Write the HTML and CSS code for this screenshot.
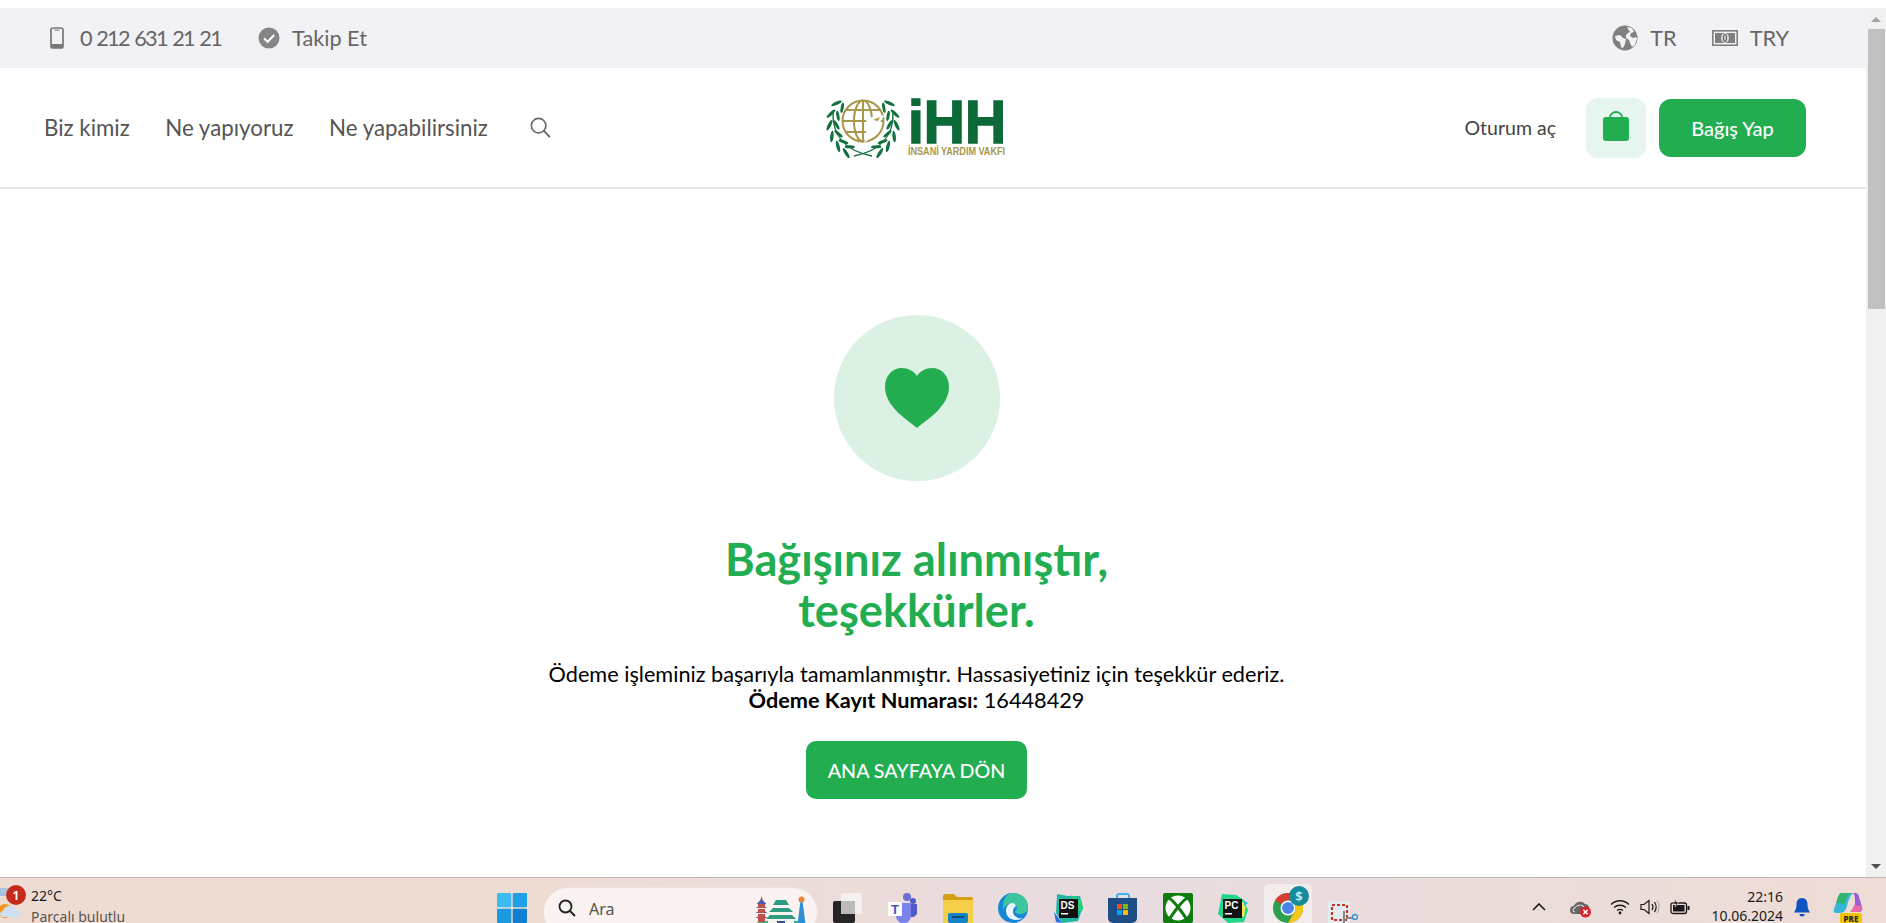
FILE: index.html
```html
<!DOCTYPE html>
<html lang="tr">
<head>
<meta charset="utf-8">
<title>Bağışınız alınmıştır</title>
<link rel="stylesheet" href="styles.css">
</head>
<body>
<div class="window">
  <div class="page">
    <div class="topbar">
      <div class="group">
        <span class="tb-item">
          <svg class="i-phone" viewBox="0 0 14 22"><rect x="1" y="1" width="12" height="20" rx="2" fill="none" stroke="#777" stroke-width="1.7"/><rect x="1" y="17" width="12" height="4" rx="1.5" fill="#777"/><rect x="4.5" y="2.6" width="5" height="1" fill="#777"/></svg>
          <span class="phone-num">0 212 631 21 21</span>
        </span>
        <span class="tb-item">
          <svg class="i-check" viewBox="0 0 22 22"><circle cx="11" cy="11" r="10.5" fill="#858585"/><path d="M6 11.2l3.6 3.6L16.2 8" fill="none" stroke="#fff" stroke-width="2"/></svg>
          Takip Et
        </span>
      </div>
      <div class="group group-right">
        <span class="tb-item">
          <svg class="i-globe" viewBox="0 0 26 26"><circle cx="13" cy="13" r="12.5" fill="#808080"/><path d="M3 11l5-1 3 3 3 1-1 5-2 4-2-1-1-5-4-2zM15 2l5 1 2 4-3 1-1 3 3 2 3-1 1 2-2 6-3 2-2-4-1-3-3-2 0-3 2-2 2-1-2-3z" fill="#f2f2f6"/></svg>
          TR
        </span>
        <span class="tb-item">
          <svg class="i-money" viewBox="0 0 26 16"><rect x="0.8" y="0.8" width="24.4" height="14.4" fill="#f2f2f6" stroke="#808080" stroke-width="1.6"/><rect x="3" y="3" width="20" height="10" fill="#808080"/><ellipse cx="13" cy="8" rx="4" ry="5" fill="#d8d8dc"/><ellipse cx="13" cy="8" rx="1.5" ry="3.5" fill="none" stroke="#666" stroke-width="1.2"/></svg>
          TRY
        </span>
      </div>
    </div>

    <header class="header">
      <nav class="nav">
        <a class="nav-link">Biz kimiz</a>
        <a class="nav-link">Ne yapıyoruz</a>
        <a class="nav-link">Ne yapabilirsiniz</a>
        <svg class="i-search" viewBox="0 0 22 22"><circle cx="9" cy="9" r="7.6" fill="none" stroke="#666" stroke-width="1.7"/><path d="M14.6 14.6l6.2 6.4" stroke="#666" stroke-width="2" fill="none"/></svg>
      </nav>
      <svg class="logo" viewBox="0 0 182 64">
        <defs>
          <g id="pair">
            <ellipse cx="3.4" cy="28" rx="1.7" ry="5.8" fill="#13703f" transform="rotate(28 3.4 28)"/>
            <ellipse cx="10.6" cy="28" rx="1.5" ry="5.2" fill="#13703f" transform="rotate(-28 10.6 28)"/>
          </g>
          <g id="branch">
            <use href="#pair" transform="rotate(38 37 28)"/>
            <use href="#pair" transform="rotate(18 37 28)"/>
            <use href="#pair" transform="rotate(-2 37 28)"/>
            <use href="#pair" transform="rotate(-22 37 28)"/>
            <use href="#pair" transform="rotate(-42 37 28)"/>
            <use href="#pair" transform="rotate(-60 37 28)"/>
            <path d="M7 16C6 40 20 55 46 60" fill="none" stroke="#13703f" stroke-width="1.400"/>
          </g>
        </defs>
        <use href="#branch"/>
        <use href="#branch" transform="translate(74 0) scale(-1 1)"/>
        <g fill="none" stroke="#a8974c" stroke-width="2">
          <circle cx="37" cy="25" r="20.5"/>
          <ellipse cx="37" cy="25" rx="9" ry="20.5"/>
          <path d="M17 25h40M20 14h34M20 36h20M37 4.500v40"/>
        </g>
        <path d="M40 24c5-3 10-5 14-4l6-1-5 4c0 8-6 17-17 24 3-8 4-16 2-23z" fill="#fff"/>
        <path d="M47 24l7-3-2 4z" fill="#a8974c"/>
        <text class="logo-main" x="82" y="47" textLength="98" lengthAdjust="spacingAndGlyphs">iHH</text>
        <text class="logo-sub" x="82" y="59" textLength="97" lengthAdjust="spacingAndGlyphs">İNSANİ YARDIM VAKFI</text>
      </svg>
      <div class="actions">
        <a class="login">Oturum aç</a>
        <span class="bag-tile">
          <svg class="i-bag" viewBox="0 0 26 30"><path d="M7 8V6.500a6 5.500 0 0 1 12 0V8" fill="none" stroke="#22ae50" stroke-width="1.800"/><rect x="0" y="6" width="26" height="24" rx="3" fill="#22ae50"/></svg>
        </span>
        <a class="donate">Bağış Yap</a>
      </div>
    </header>

    <main class="content">
      <div class="heart-circle">
        <svg class="i-heart" viewBox="0 0 64 60"><path d="M32 60C26 54 0 40 0 19 0 8 7 0 17 0c6 0 12 3 15 8 3-5 9-8 15-8 10 0 17 8 17 19 0 21-26 35-32 41z" fill="#22ae50"/></svg>
      </div>
      <h1 class="title">Bağışınız alınmıştır,<br>teşekkürler.</h1>
      <p class="message">Ödeme işleminiz başarıyla tamamlanmıştır. Hassasiyetiniz için teşekkür ederiz.<br><strong>Ödeme Kayıt Numarası:</strong> 16448429</p>
      <a class="home-btn">ANA SAYFAYA DÖN</a>
    </main>
  </div>
  <div class="scrollbar">
    <span class="arrow-up"></span>
    <span class="thumb"></span>
    <span class="arrow-down"></span>
  </div>
</div>

<footer class="taskbar">
  <div class="weather">
    <svg class="i-weather" viewBox="0 0 24 34"><path d="M0 4h6c5 0 7 4 5 8H0z" fill="#a9c5e4"/><circle cx="5" cy="27" r="7" fill="#f2941e"/><path d="M3 33c-4 0-4-6 0-6 1-3 3-5 7-5 3 0 5 2 6 4 4 0 7 3 6 7z" fill="#cfe0f2"/></svg>
    <span class="badge">1</span>
    <div class="weather-text">
      <span class="temp">22°C</span>
      <span class="cond">Parçalı bulutlu</span>
    </div>
  </div>
  <div class="apps">
    <svg class="tile i-win" viewBox="0 0 30 30"><rect width="14.300" height="14.300" rx="1.500" fill="#3dbcf2"/><rect x="15.700" width="14.300" height="14.300" rx="1" fill="#1e9fe6"/><rect y="15.700" width="14.300" height="14.300" rx="1" fill="#1a98e0"/><rect x="15.700" y="15.700" width="14.300" height="14.300" rx="1" fill="#0f7fd2"/></svg>
    <div class="searchbox">
      <svg class="i-find" viewBox="0 0 18 18"><circle cx="7.500" cy="7.500" r="6" fill="none" stroke="#222" stroke-width="1.800"/><path d="M12 12l5 5" stroke="#222" stroke-width="2"/></svg>
      <span class="ara">Ara</span>
      <svg class="i-scene" viewBox="0 0 58 32">
        <ellipse cx="29" cy="30" rx="29" ry="6" fill="#3fb58e"/>
        <path d="M9.500 0l1 4h-2z" fill="#c03a3a"/>
        <path d="M9.500 3l5 5h-10zM9.500 8l5.500 4h-11zM9.500 13l6 4h-12zM9.500 18l6 4h-12z" fill="#4a5fa5"/>
        <path d="M6 8h7v4H6zM6 13h7v4H6zM6 18h7v8H6z" fill="#c0504a"/>
        <path d="M24 4h10l3 5H21z" fill="#2e9a7f"/>
        <rect x="24" y="9" width="10" height="4" fill="#f3f6ef"/>
        <path d="M21 12h16l4 4H17z" fill="#2e9a7f"/>
        <rect x="20" y="16" width="18" height="4" fill="#f3f6ef"/>
        <path d="M18 19h22l4 4H14z" fill="#2e9a7f"/>
        <rect x="16" y="23" width="26" height="6" fill="#f3f6ef"/>
        <rect x="25" y="25" width="8" height="4" fill="#34508f"/>
        <path d="M48.500 5h2l3 23h-8z" fill="#2d8fd6"/>
        <circle cx="49.500" cy="3.500" r="3" fill="#e8873a"/>
      </svg>
    </div>
    <div class="app-list">
      <svg class="tile" viewBox="0 0 30 30"><rect x="8" y="0" width="21" height="21" rx="2" fill="#f4f1f0"/><rect x="0" y="8" width="22" height="22" rx="2" fill="#262626"/><rect x="8" y="8" width="14" height="13" fill="#bdbbba"/></svg>
      <svg class="tile" viewBox="0 0 30 30"><circle cx="19" cy="4" r="4" fill="#6b6fd0"/><circle cx="25" cy="8" r="3" fill="#5059c9"/><path d="M21 11h8v9a5 5 0 0 1-8 3z" fill="#5059c9"/><path d="M8 10h15v13a7 7 0 0 1-15 0z" fill="#7b83eb"/><rect x="0" y="9" width="14" height="14" fill="#fff"/><text class="teams-t" x="7" y="21" text-anchor="middle">T</text></svg>
      <svg class="tile" viewBox="0 0 30 30"><path d="M0 3a2 2 0 0 1 2-2h9l3 3h14a2 2 0 0 1 2 2v5H0z" fill="#d69e13"/><path d="M0 7h30v23H0z" fill="#f6cf4a"/><rect x="5" y="20" width="20" height="10" rx="2" fill="#1583c7"/><rect x="9" y="23" width="12" height="2" fill="#0a4f80"/></svg>
      <svg class="tile" viewBox="0 0 30 30"><circle cx="15" cy="15" r="15" fill="#1686d6"/><path d="M15 0c9 0 15 6 15 14 0 5-4 7-8 7-3 0-5-1-5-3 2-1 3-3 1-5-4-4-12-2-13 5-1-10 3-18 10-18z" fill="#3cc6a0"/><path d="M15 10c-4 0-7 3-7 8 0 5 4 9 10 9 3 0 5-1 7-2-6 1-10-2-10-7 0-3 2-4 3-5-1-2-2-3-3-3z" fill="#eaf5fb"/></svg>
      <svg class="tile" viewBox="0 0 30 30"><path d="M4 1l11 2 12 0 3 11-5 14-16 2-6-10z" fill="#1fb8a5"/><path d="M18 2l10 5 2 10-8 2z" fill="#2ad07c"/><path d="M1 19l8 11-6-1z" fill="#2c6be0"/><rect x="6" y="6" width="19" height="19" fill="#111"/><text class="jb" x="7.500" y="16">DS</text><rect x="8" y="20" width="7" height="1.500" fill="#fff"/></svg>
      <svg class="tile" viewBox="0 0 30 30"><path d="M9 7V3a2 2 0 0 1 2-2h8a2 2 0 0 1 2 2v4" fill="none" stroke="#3fb4e8" stroke-width="2"/><path d="M0 5h29v20a5 5 0 0 1-5 5H5a5 5 0 0 1-5-5z" fill="#1d4f86"/><rect x="9" y="11" width="5" height="5" fill="#f25022"/><rect x="15" y="11" width="5" height="5" fill="#7fba00"/><rect x="9" y="17" width="5" height="5" fill="#00a4ef"/><rect x="15" y="17" width="5" height="5" fill="#ffb900"/></svg>
      <svg class="tile" viewBox="0 0 30 30"><rect width="30" height="30" rx="2" fill="#107c10"/><circle cx="15" cy="15" r="12.500" fill="#fff"/><path d="M6 5C11 8 20 20 24 27M24 5C19 8 10 20 6 27" fill="none" stroke="#107c10" stroke-width="3"/></svg>
      <svg class="tile" viewBox="0 0 30 30"><path d="M4 1l14 1 8 5 4 10-4 12-16 1-10-9z" fill="#21d789"/><path d="M20 8l8 2-2 14-6-1z" fill="#f8e84f"/><path d="M26 8l4 2-4 3z" fill="#1fb8d3"/><rect x="5" y="6" width="19" height="19" fill="#111"/><text class="jb" x="6.500" y="16">PC</text><rect x="7" y="20" width="7" height="1.500" fill="#fff"/></svg>
      <span class="chrome-item">
        <svg class="tile tile-chrome" viewBox="0 0 30 30"><circle cx="15" cy="15" r="15" fill="#2f9e4f"/><path d="M15 0a15 15 0 0 1 13 7.500H15a7.500 7.500 0 0 0-6.500 3.800L2 7.500A15 15 0 0 1 15 0z" fill="#d93c30"/><path d="M28 7.500A15 15 0 0 1 15 30l6.500-11.300A7.500 7.500 0 0 0 21.500 11z" fill="#f5c518"/><circle cx="15" cy="15" r="7.500" fill="#fff"/><circle cx="15" cy="15" r="6" fill="#4a86e8"/></svg>
        <span class="s-badge">$</span>
      </span>
      <svg class="tile snip" viewBox="0 0 30 22"><rect width="22" height="22" rx="2" fill="#e4ecf0"/><rect x="4" y="4" width="15" height="15" fill="none" stroke="#c0392b" stroke-width="2.200" stroke-dasharray="3 2"/><path d="M16 10v12M18 17h6" stroke="#888" stroke-width="2"/><circle cx="27" cy="16" r="2.500" fill="none" stroke="#3a92d8" stroke-width="1.500"/></svg>
    </div>
  </div>
  <div class="tray">
    <svg class="i-caret" viewBox="0 0 14 8"><path d="M1 7l6-6 6 6" fill="none" stroke="#1a1a1a" stroke-width="1.600"/></svg>
    <svg class="i-cloud" viewBox="0 0 22 20"><path d="M4 16a4 4 0 0 1 0-8c1-4 8-6 11-2 3 0 5 3 4 6l-3 4z" fill="#666"/><path d="M5 14a2 2 0 0 1 0-4c1-3 7-4 9-1" fill="none" stroke="#eee" stroke-width="1"/><circle cx="15.500" cy="14" r="5.500" fill="#d8232f"/><path d="M13.300 11.800l4.400 4.400M17.700 11.800l-4.400 4.400" stroke="#fff" stroke-width="1.500"/></svg>
    <svg class="i-wifi" viewBox="0 0 20 16"><path d="M1 5.500c5-5 13-5 18 0M4 8.500c3.500-3 8.500-3 12 0M7 11.500c2-1.500 4-1.500 6 0" fill="none" stroke="#1a1a1a" stroke-width="1.300"/><circle cx="10" cy="14" r="1.400" fill="#1a1a1a"/></svg>
    <svg class="i-sound" viewBox="0 0 20 16"><path d="M1 5.500h3l5-4v13l-5-4H1z" fill="none" stroke="#1a1a1a" stroke-width="1.200"/><path d="M12 5c1.300 2 1.300 4 0 6M14.500 3c2 3 2 7 0 10" fill="none" stroke="#1a1a1a" stroke-width="1.200"/><path d="M17 1.500c2.600 4 2.600 9 0 13" fill="none" stroke="#aaa" stroke-width="1.100"/></svg>
    <svg class="i-batt" viewBox="0 0 20 16"><rect x="1" y="4" width="15.500" height="10.500" rx="2" fill="none" stroke="#1a1a1a" stroke-width="1.300"/><rect x="3" y="6" width="11.500" height="6.500" fill="#1a1a1a"/><rect x="17.500" y="7" width="2" height="4" fill="#1a1a1a"/><path d="M6 0L3 5h3l-1 3 4-5H6z" fill="#1a1a1a" stroke="#eedcd3" stroke-width=".6"/></svg>
    <div class="clock"><span>22:16</span><span>10.06.2024</span></div>
    <svg class="i-bell" viewBox="0 0 16 20"><path d="M8 0c-4 0-5.500 3-5.500 6.500C2.500 10 1.500 12 0 14.500h16C14.500 12 13.500 10 13.500 6.500 13.500 3 12 0 8 0z" fill="#0f53c0"/><path d="M5.500 16a2.500 2.500 0 0 0 5 0z" fill="#0f53c0"/></svg>
    <span class="copilot">
      <svg class="i-copilot" viewBox="0 0 30 26"><path d="M9 1h11c-3 3-5 8-6 13-1 4-3 7-7 7H3c-2 0-3-2-2-4l4-12c1-3 2-4 4-4z" fill="#36b7d8"/><path d="M9 1c-2 0-3 2-4 4L3 12c3-2 6-1 8 1l3-8c1-3 3-4 6-4z" fill="#2fb56e"/><path d="M20 1h2c2 0 4 1 4 4l3 10c1 3-1 5-3 5h-9c4-2 5-6 5-10s0-7-2-9z" fill="#9b5ed6"/><path d="M24 20h-7c2-2 3-4 4-7l8 1c1 4-2 6-5 6z" fill="#e86bb0"/></svg>
      <span class="pre">PRE</span>
    </span>
  </div>
</footer>
</body>
</html>
```

FILE: styles.css
```css
* { box-sizing: border-box; }
html, body { margin: 0; height: 100%; overflow: hidden; background: #fff; }
body {
  display: flex;
  flex-direction: column;
  height: 923px;
  font-family: Lato, "Open Sans", sans-serif;
}
.window { flex: 0 0 877px; display: flex; min-height: 0; }
.page { flex: 1; min-width: 0; padding-top: 8px; }

.topbar {
  height: 60px;
  background: #f2f2f6;
  display: flex;
  align-items: center;
  justify-content: space-between;
  padding: 0 77px 0 49px;
  color: #666;
  font-size: 21.7px;
}
.group { display: flex; align-items: center; gap: 37px; }
.group-right { gap: 35px; }
.tb-item { display: inline-flex; align-items: center; gap: 12px; }
.phone-num { letter-spacing: -1.7px; word-spacing: 1.5px; margin-left: 3px; }
.i-phone { width: 16px; height: 22px; }
.i-check { width: 22px; height: 22px; }
.i-globe { width: 26px; height: 26px; }
.i-money { width: 26px; height: 16px; }

.header {
  height: 121px;
  border-bottom: 2px solid #e8e8ea;
  display: flex;
  align-items: center;
  justify-content: space-between;
  padding: 0 60px 0 44px;
}
.nav { display: flex; align-items: center; gap: 35.5px; color: #555; font-size: 22.3px; flex: 1; }
.nav-link { white-space: nowrap; }
.i-search { width: 21px; height: 21px; margin-left: 7px; }
.logo { width: 182px; height: 64px; flex: none; margin-right: 17px; overflow: visible; }
.logo-main { font-family: "Liberation Sans", sans-serif; font-weight: 700; font-size: 62px; fill: #0c6a38; stroke: #0c6a38; stroke-width: 1.6px; }
.logo-sub { font-family: "Liberation Sans", sans-serif; font-weight: 700; font-size: 10.5px; fill: #a8974c; }
.actions { display: flex; align-items: center; flex: 1; justify-content: flex-end; }
.login { font-size: 19.5px; color: #444; margin-right: 30px; }
.bag-tile {
  width: 60px; height: 60px; border-radius: 12px; background: #e6f5ed;
  display: flex; align-items: center; justify-content: center;
}
.i-bag { width: 26px; height: 30px; margin-bottom: 4px; }
.donate {
  width: 147px; height: 58px; margin-left: 13px; border-radius: 12px;
  background: #22ae50; color: #fff; font-size: 20px; font-weight: 500;
  display: flex; align-items: center; justify-content: center;
}

.content { display: flex; flex-direction: column; align-items: center; padding: 126px 33px 0 0; }
.heart-circle {
  width: 166px; height: 166px; border-radius: 50%; background: #dbf1e3;
  display: flex; align-items: center; justify-content: center;
}
.i-heart { width: 64px; height: 60px; }
.title {
  margin: 52px 0 0;
  font-size: 45.2px;
  line-height: 51px;
  font-weight: 700;
  color: #22ae50;
  text-align: center;
}
.message {
  margin: 26px 0 0;
  font-size: 21.7px;
  line-height: 26px;
  color: #000;
  text-align: center;
}
.message strong { font-weight: 700; }
.home-btn {
  margin-top: 28px;
  width: 221px; height: 58px; border-radius: 10px;
  background: #22ae50; color: #fff; font-size: 19.7px; font-weight: 500;
  display: flex; align-items: center; justify-content: center;
}

.scrollbar { flex: 0 0 20px; background: #f1f1f1; margin-top: 8px; display: flex; flex-direction: column; align-items: center; }
.arrow-up { width: 0; height: 0; margin-top: 9px; border: 5px solid transparent; border-top: 0; border-bottom: 5px solid #a3a3a3; flex: none; }
.thumb { width: 17px; height: 280px; margin-top: 7px; background: #c1c1c1; flex: none; }
.arrow-down { width: 0; height: 0; margin-top: auto; margin-bottom: 8px; border: 5px solid transparent; border-bottom: 0; border-top: 5px solid #505050; flex: none; }

.taskbar {
  flex: 0 0 46px;
  height: 46px;
  overflow: hidden;
  border-top: 1px solid #bdb6b2;
  background: linear-gradient(90deg, #eedcd3 0%, #eedcd4 30%, #e9dce0 60%, #eedcd5 100%);
  display: flex;
  font-family: "Noto Sans", "Open Sans", sans-serif;
  color: #1a1a1a;
}
.weather { flex: 0 0 497px; display: flex; position: relative; padding-top: 6px; }
.i-weather { width: 24px; height: 34px; flex: none; }
.badge {
  position: absolute; left: 6px; top: 7px; width: 20px; height: 20px; border-radius: 50%;
  background: #c42b1c; color: #fff; font-size: 13px; font-weight: 600;
  display: flex; align-items: center; justify-content: center;
}
.weather-text { display: flex; flex-direction: column; margin-left: 7px; margin-top: 1px; font-size: 14px; line-height: 21px; }
.temp { color: #1a1a1a; }
.cond { color: #5a5450; }

.apps { display: flex; align-items: flex-start; padding-top: 15px; }
.tile { width: 30px; height: 30px; flex: none; display: block; }
.i-win { margin-right: 16px; }
.searchbox {
  width: 275px; height: 50px; margin-top: -6px; border-radius: 25px;
  background: #faf3f1; border: 1px solid #ece2de;
  display: flex; align-items: flex-start; padding: 11px 7px 0 14px; margin-right: 15px;
}
.i-find { width: 18px; height: 18px; flex: none; }
.ara { margin-left: 13px; font-size: 16px; line-height: 20px; color: #555; }
.i-scene { width: 58px; height: 32px; margin-left: auto; margin-top: -3px; }
.app-list { display: flex; gap: 25px; }
.teams-t { font-family: "Liberation Sans", sans-serif; font-weight: 700; font-size: 13px; fill: #4b53bc; }
.jb { font-family: "Liberation Sans", sans-serif; font-weight: 700; font-size: 10px; fill: #fff; }
.chrome-item { position: relative; width: 30px; height: 30px; display: block; }
.chrome-item::before {
  content: ""; position: absolute; left: -9px; top: -9px; width: 48px; height: 60px;
  border-radius: 5px; background: rgba(255,255,255,.45);
}
.tile-chrome { position: relative; }
.s-badge {
  position: absolute; left: 16px; top: -7px; width: 20px; height: 20px; border-radius: 50%;
  background: #178a9c; color: #bfe6ea; font-size: 13px; font-weight: 700;
  display: flex; align-items: center; justify-content: center;
}
.snip { margin-top: 8px; height: 22px; }

.tray { margin-left: auto; display: flex; align-items: flex-start; flex: 0 0 auto; }
.i-caret { width: 14px; height: 8px; margin: 25px 24px 0 0; flex: none; }
.i-cloud { width: 22px; height: 20px; margin: 20px 18px 0 0; flex: none; }
.i-wifi { width: 20px; height: 16px; margin: 21px 10px 0 0; flex: none; }
.i-sound { width: 20px; height: 16px; margin: 21px 10px 0 0; flex: none; }
.i-batt { width: 20px; height: 16px; margin: 21px 0 0 0; flex: none; }
.clock { width: 93px; display: flex; flex-direction: column; align-items: flex-end; font-size: 14px; line-height: 19px; padding-top: 9px; }
.i-bell { width: 16px; height: 20px; margin: 20px 0 0 11px; flex: none; }
.copilot { position: relative; width: 30px; height: 40px; margin: 14px 23px 0 23px; flex: none; }
.i-copilot { width: 30px; height: 26px; display: block; }
.pre {
  position: absolute; left: 7px; top: 21px; width: 22px; height: 11px; border-radius: 2px;
  background: #f5c400; color: #222; font-size: 8px; line-height: 11px; font-weight: 800; text-align: center;
}
```
